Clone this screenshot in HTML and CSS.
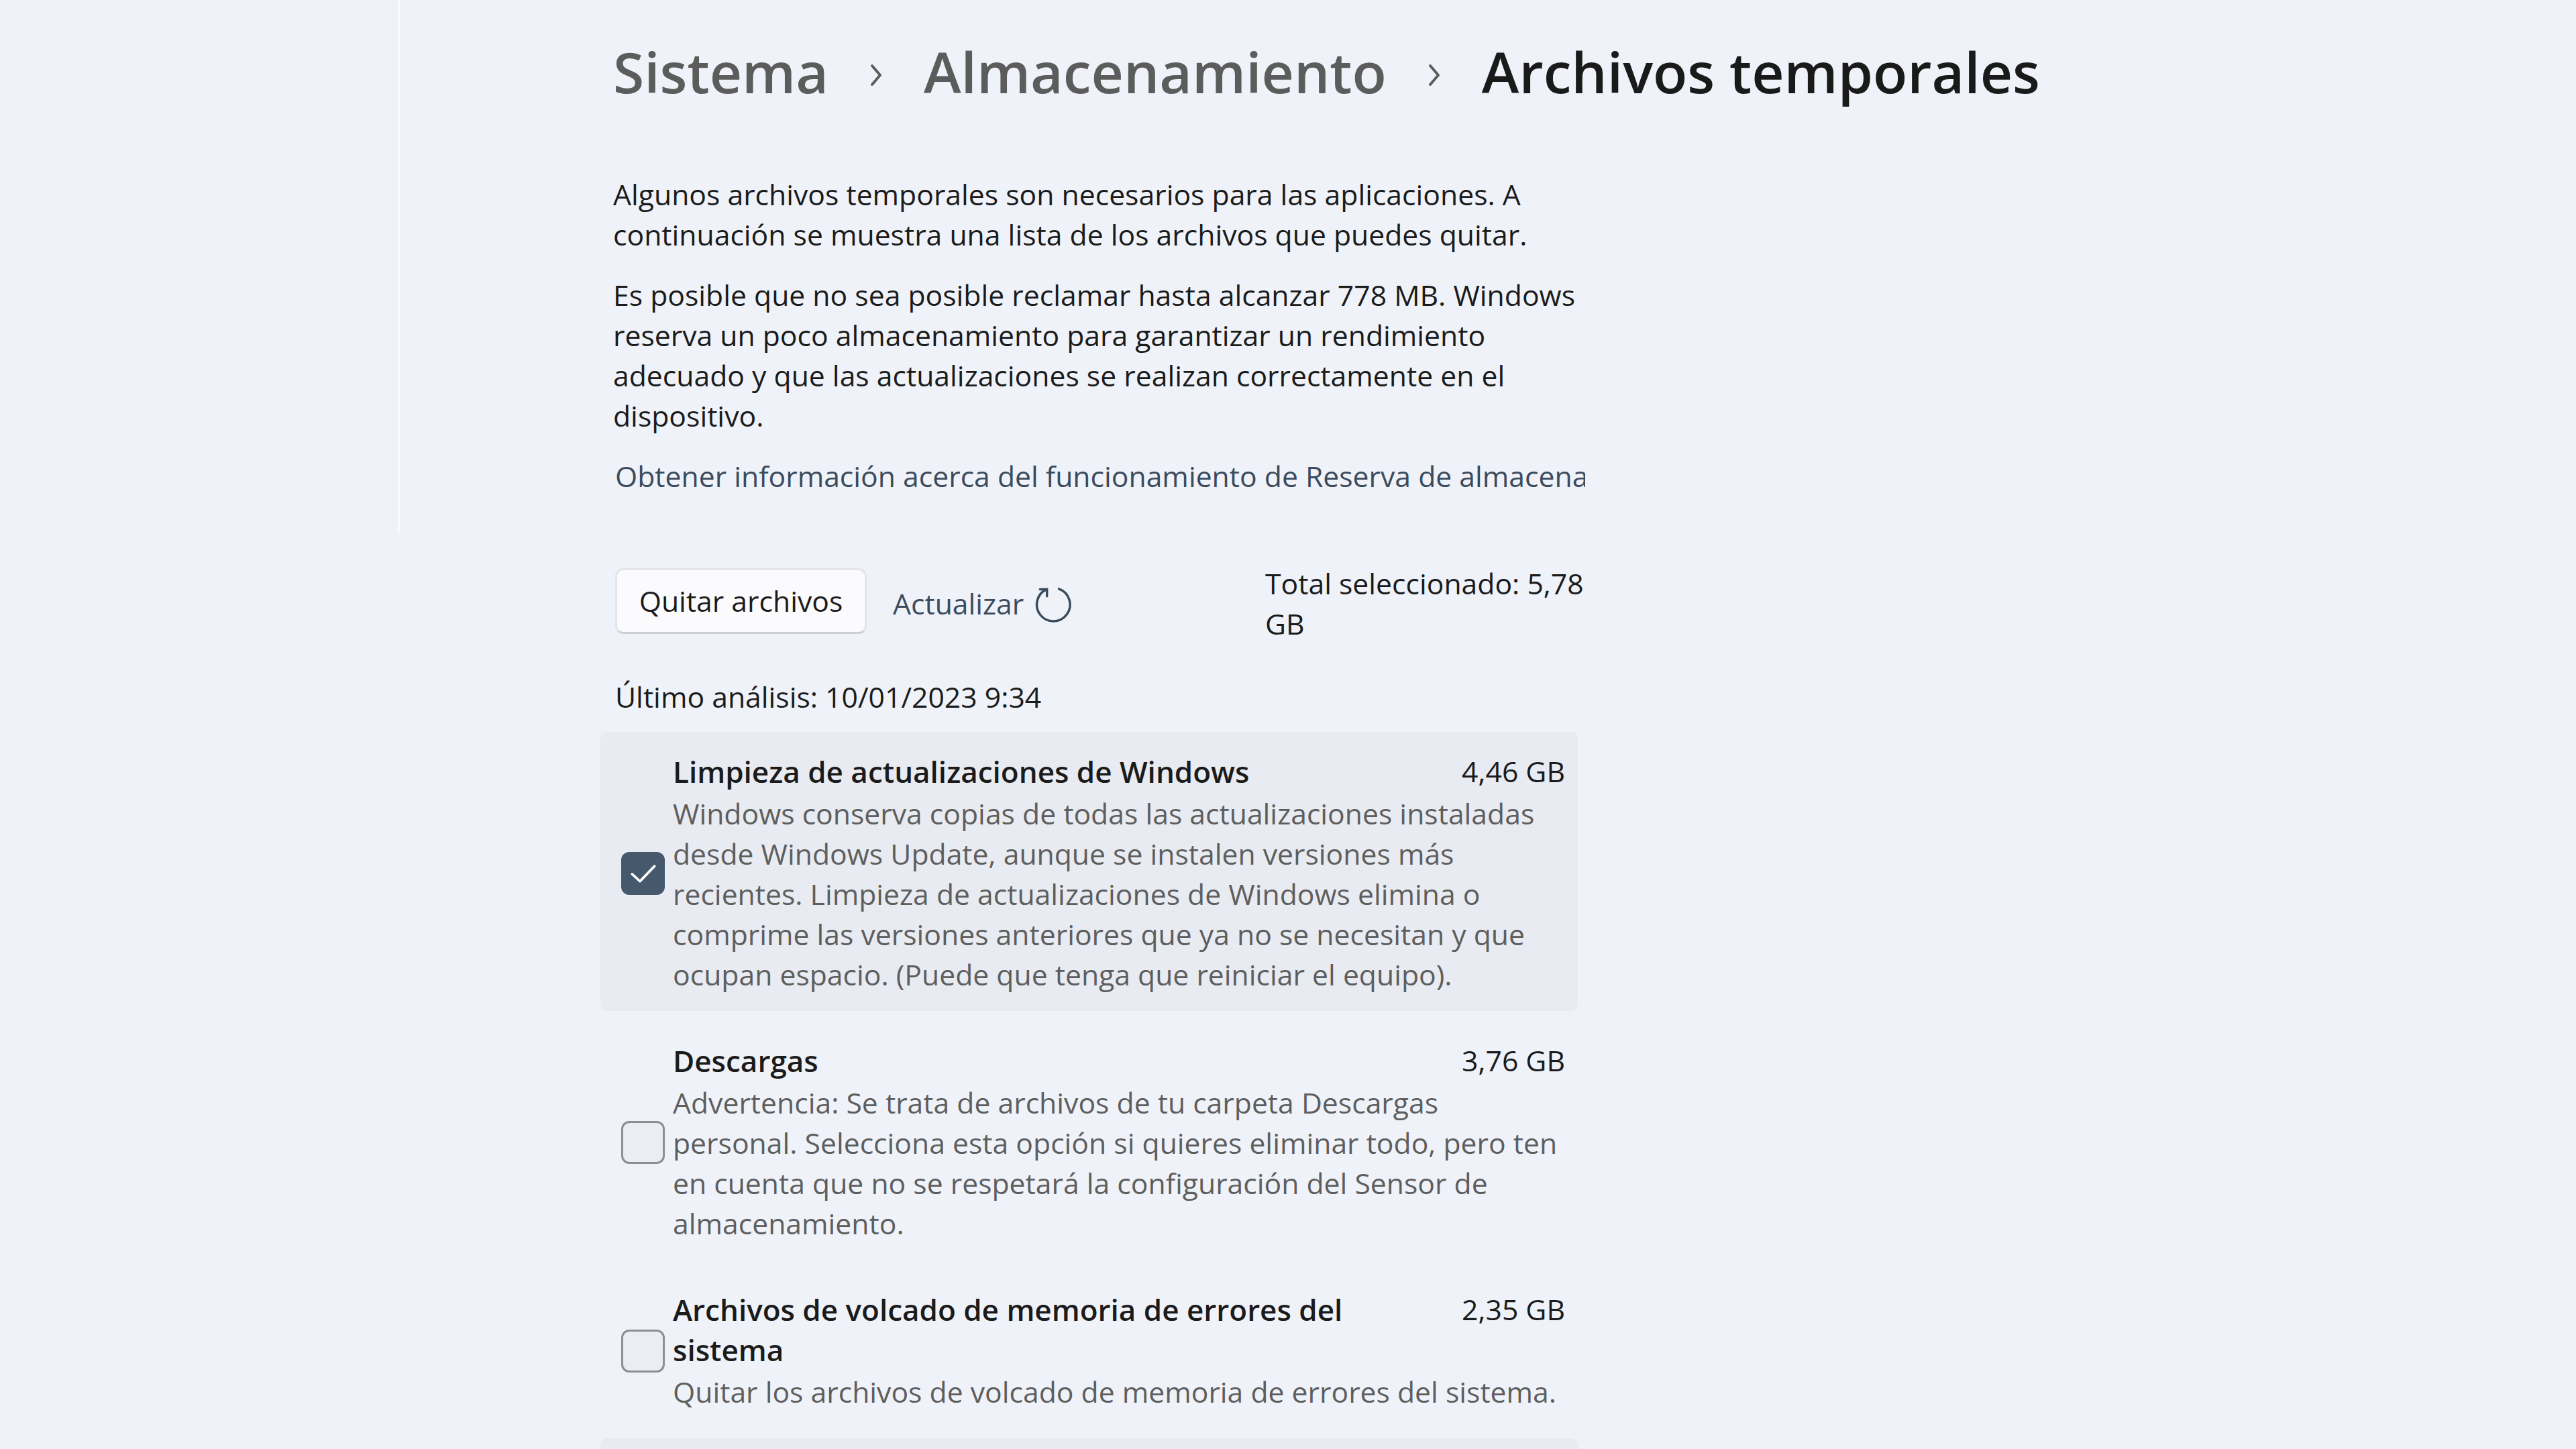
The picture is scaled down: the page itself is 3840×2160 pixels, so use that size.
FILE: index.html
```html
<!DOCTYPE html>
<html lang="es">
<head>
    <meta charset="UTF-8">
    <meta name="viewport" content="width=device-width, initial-scale=1.0">
    <title>Archivos temporales</title>
    <link rel="stylesheet" href="styles.css">
</head>
<body>
    <div class="window">
        <aside class="nav"></aside>

        <main class="content">
            <header class="breadcrumb">
                <span class="crumb">Sistema</span>
                <svg class="chevron" viewBox="0 0 20 36"><path d="M4 4 L16 18 L4 32"/></svg>
                <span class="crumb">Almacenamiento</span>
                <svg class="chevron" viewBox="0 0 20 36"><path d="M4 4 L16 18 L4 32"/></svg>
                <span class="crumb current">Archivos temporales</span>
            </header>

            <section class="intro">
                <p>Algunos archivos temporales son necesarios para las aplicaciones. A continuación se muestra una lista de los archivos que puedes quitar.</p>
                <p>Es posible que no sea posible reclamar hasta alcanzar 778 MB. Windows reserva un poco almacenamiento para garantizar un rendimiento adecuado y que las actualizaciones se realizan correctamente en el dispositivo.</p>
                <a class="link" href="#">Obtener información acerca del funcionamiento de Reserva de almacenamiento</a>
            </section>

            <div class="actions">
                <button class="btn">Quitar archivos</button>
                <button class="link-btn">Actualizar
                    <svg class="refresh" viewBox="0 0 24 24">
                        <path d="M15.2 3.7 A9.3 9.3 0 1 1 8.5 3.9"/>
                        <path d="M4.6 3.9 H8.5 V7.8"/>
                    </svg>
                </button>
                <div class="total">Total seleccionado: 5,78 GB</div>
            </div>

            <p class="last-scan">Último análisis: 10/01/2023 9:34</p>

            <ul class="items">
                <li class="item selected">
                    <span class="check checked"><svg viewBox="0 0 64 64"><path d="M14 33 L27 45 L51 20"/></svg></span>
                    <div class="item-body">
                        <div class="item-head">
                            <span class="item-title">Limpieza de actualizaciones de Windows</span>
                            <span class="item-size">4,46 GB</span>
                        </div>
                        <p class="item-desc">Windows conserva copias de todas las actualizaciones instaladas desde Windows Update, aunque se instalen versiones más recientes. Limpieza de actualizaciones de Windows elimina o comprime las versiones anteriores que ya no se necesitan y que ocupan espacio. (Puede que tenga que reiniciar el equipo).</p>
                    </div>
                </li>
                <li class="item">
                    <span class="check"></span>
                    <div class="item-body">
                        <div class="item-head">
                            <span class="item-title">Descargas</span>
                            <span class="item-size">3,76 GB</span>
                        </div>
                        <p class="item-desc">Advertencia: Se trata de archivos de tu carpeta Descargas personal. Selecciona esta opción si quieres eliminar todo, pero ten en cuenta que no se respetará la configuración del Sensor de almacenamiento.</p>
                    </div>
                </li>
                <li class="item">
                    <span class="check"></span>
                    <div class="item-body">
                        <div class="item-head">
                            <span class="item-title">Archivos de volcado de memoria de errores del sistema</span>
                            <span class="item-size">2,35 GB</span>
                        </div>
                        <p class="item-desc">Quitar los archivos de volcado de memoria de errores del sistema.</p>
                    </div>
                </li>
                <li class="item selected">
                    <span class="check checked"><svg viewBox="0 0 64 64"><path d="M14 33 L27 45 L51 20"/></svg></span>
                    <div class="item-body">
                        <div class="item-head">
                            <span class="item-title">Archivos de optimización de distribución</span>
                            <span class="item-size">1,32 GB</span>
                        </div>
                        <p class="item-desc">Los archivos de optimización de distribución son archivos que se descargaron anteriormente en tu equipo.</p>
                    </div>
                </li>
            </ul>
        </main>
    </div>
</body>
</html>
```

FILE: styles.css
```css
html, body {
    margin: 0;
    height: 2160px;
    overflow: hidden;
}
body {
    background: #eff3f9;
    font-family: "Open Sans", "Noto Sans", sans-serif;
    font-size: 42.7px;
    line-height: 60px;
    color: #1b1b1b;
}
.window {
    display: flex;
    height: 2160px;
}
.nav {
    flex: 0 0 593px;
    height: 796px;
    border-right: 3px solid #f8faff;
}
.content {
    width: 1452px;
    padding-left: 318px;
}

/* breadcrumb title */
.breadcrumb {
    display: flex;
    align-items: center;
    width: max-content;
    gap: 61px;
    padding-top: 47px;
    height: 120px;
    font-size: 84px;
    line-height: 120px;
    font-weight: 600;
    white-space: nowrap;
}
.crumb {
    color: #5c5c5c;
}
.crumb.current {
    color: #1a1a1a;
}
.chevron {
    flex: none;
    width: 20px;
    height: 36px;
    margin-top: 10px;
    fill: none;
    stroke: #5c5c5c;
    stroke-width: 4;
    stroke-linecap: round;
    stroke-linejoin: round;
}

.intro {
    margin-top: 93px;
}
.intro p {
    margin: 0 0 30px;
}
.link {
    display: block;
    width: 1446px;
    margin-left: 3px;
    color: #3b4b5c;
    text-decoration: none;
    white-space: nowrap;
    overflow: hidden;
}

/* action row */
.actions {
    display: flex;
    align-items: center;
    margin-top: 100px;
    height: 120px;
}
.btn {
    box-sizing: border-box;
    align-self: flex-start;
    width: 375px;
    height: 98px;
    padding: 0;
    margin: 7px 0 0 3px;
    background: #fbfbfd;
    border: 3px solid #e3e5e9;
    border-bottom-color: #cdd0d5;
    border-radius: 12px;
    font: inherit;
    color: #1b1b1b;
}
.link-btn {
    display: flex;
    align-items: center;
    gap: 12px;
    margin-left: 39px;
    padding: 0;
    background: none;
    border: none;
    font: inherit;
    color: #3b4b5c;
}
.refresh {
    width: 64px;
    height: 64px;
    fill: none;
    stroke: #3b4b5c;
    stroke-width: 1.3;
    stroke-linecap: round;
    stroke-linejoin: round;
}
.total {
    width: 480px;
    margin-left: auto;
}

.last-scan {
    margin: 49px 0 0 3px;
}

/* list of temporary file categories */
.items {
    list-style: none;
    margin: 22px 0 0 -19px;
    padding: 0;
    width: 1457px;
    display: flex;
    flex-direction: column;
    gap: 15px;
}
.item {
    display: flex;
    align-items: center;
    gap: 12px;
    padding: 29px 19px 24px 31px;
    border-radius: 10px;
}
.item.selected {
    background: #e8ebf1;
}
.check {
    flex: 0 0 auto;
    box-sizing: border-box;
    width: 65px;
    height: 64px;
    border: 3px solid #8b8e93;
    border-radius: 12px;
    background: rgba(0, 0, 0, 0.02);
}
.check.checked {
    background: #46586b;
    border-color: #46586b;
}
.check svg {
    display: block;
    width: 59px;
    height: 58px;
    fill: none;
    stroke: #fff;
    stroke-width: 4;
    stroke-linecap: round;
    stroke-linejoin: round;
}
.item-body {
    flex: 1;
}
.item-head {
    display: grid;
    grid-template-columns: 1fr auto;
    column-gap: 48px;
}
.item-title {
    font-size: 44px;
    font-weight: 600;
}
.item-desc {
    margin: 3px 0 0;
    color: #5e5e5e;
}
```
